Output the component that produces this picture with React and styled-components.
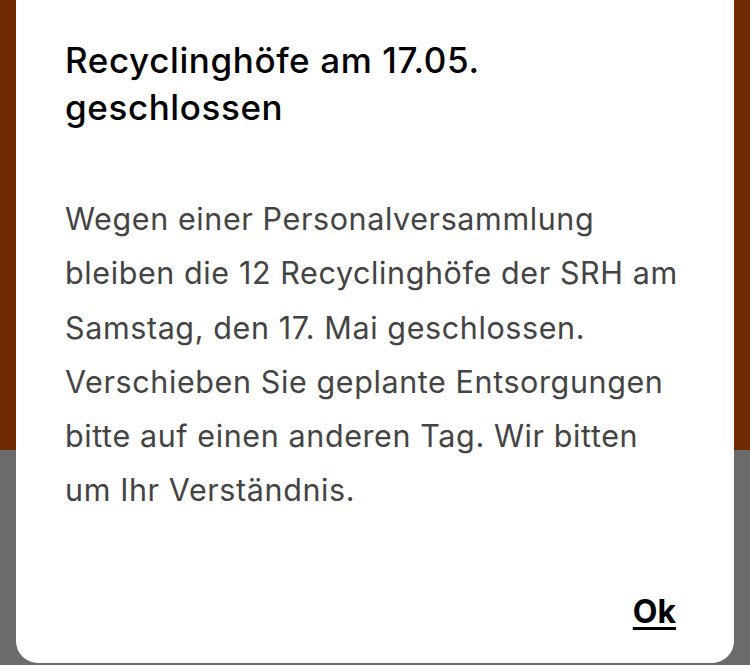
import styled, { createGlobalStyle } from 'styled-components'

const Global = createGlobalStyle`
  html, body {
    margin: 0;
    padding: 0;
    overflow: hidden;
  }
`

const Backdrop = styled.div`
  width: 750px;
  height: 665px;
  background: linear-gradient(#712b04 0, #712b04 450px, #6b6b6b 450px);
  display: flex;
  flex-direction: column;
  align-items: stretch;
  padding: 0 16px;
  box-sizing: border-box;
`

const Dialog = styled.div`
  margin-top: -24px;
  height: 687px;
  background: #fff;
  border-radius: 22px;
  box-sizing: border-box;
  padding: 61px 49px 32px 49px;
  display: flex;
  flex-direction: column;
`

const Title = styled.h1`
  margin: 0;
  font-family: Inter, 'Liberation Sans', sans-serif;
  font-weight: 500;
  font-size: 35px;
  line-height: 47px;
  letter-spacing: 0.6px;
  color: #000;
`

const Body = styled.p`
  margin: 61px 0 0;
  font-family: Inter, 'Liberation Sans', sans-serif;
  font-weight: 400;
  font-size: 30.5px;
  line-height: 54.3px;
  letter-spacing: 0.6px;
  color: #444;
`

const Actions = styled.div`
  margin-top: auto;
  display: flex;
  justify-content: flex-end;
  padding-right: 9px;
`

const OkButton = styled.button`
  border: none;
  background: none;
  padding: 0;
  font-family: Inter, 'Liberation Sans', sans-serif;
  font-weight: 700;
  font-size: 32px;
  color: #000;
  text-decoration: underline;
  text-decoration-thickness: 3px;
  text-underline-offset: 4px;
  cursor: pointer;
`

export default function App() {
  return (
    <>
      <Global />
      <Backdrop>
        <Dialog>
          <Title>
            Recyclinghöfe am 17.05.
            <br />
            geschlossen
          </Title>
          <Body>
            Wegen einer Personalversammlung bleiben die 12 Recyclinghöfe der SRH am Samstag, den 17. Mai geschlossen. Verschieben Sie geplante Entsorgungen bitte auf einen anderen Tag. Wir bitten um Ihr Verständnis.
          </Body>
          <Actions>
            <OkButton>Ok</OkButton>
          </Actions>
        </Dialog>
      </Backdrop>
    </>
  )
}
